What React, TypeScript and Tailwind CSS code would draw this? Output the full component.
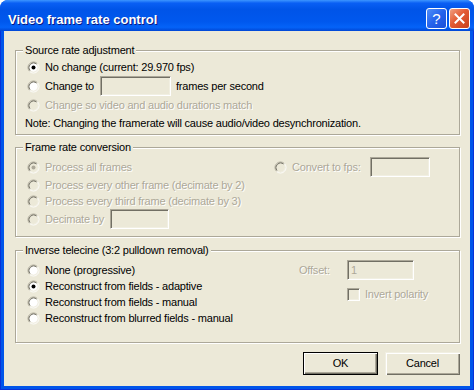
import type { ReactNode } from 'react';

// classic (non-themed) controls inside an XP Luna window frame

function Radio({ checked = false, disabled = false }: { checked?: boolean; disabled?: boolean }) {
  return (
    <svg width="13" height="13" viewBox="0 0 13 13" className="shrink-0">
      <circle cx="6.5" cy="6.5" r="4.5" fill={disabled ? '#ECE9D8' : '#FFFFFF'} />
      <path d="M2.61 10.39 A5.5 5.5 0 0 1 10.39 2.61" fill="none" stroke="#ACA899" />
      <path d="M10.39 2.61 A5.5 5.5 0 0 1 2.61 10.39" fill="none" stroke="#FFFFFF" />
      <path d="M3.32 9.68 A4.5 4.5 0 0 1 9.68 3.32" fill="none" stroke="#716F64" />
      <path d="M9.68 3.32 A4.5 4.5 0 0 1 3.32 9.68" fill="none" stroke="#F1EFE2" />
      {checked && <circle cx="6.5" cy="6.5" r="2" fill={disabled ? '#ACA899' : '#000000'} />}
    </svg>
  );
}

function Checkbox() {
  return (
    <div className="w-[13px] h-[13px] shrink-0 border border-t-[#ACA899] border-l-[#ACA899] border-b-white border-r-white shadow-[inset_1px_1px_0_#716F64,inset_-1px_-1px_0_#F1EFE2] bg-[#ECE9D8]" />
  );
}

function TextBox({ className = '', value = '' }: { className?: string; value?: string }) {
  return (
    <div
      className={`shrink-0 border border-t-[#ACA899] border-l-[#ACA899] border-b-white border-r-white shadow-[inset_1px_1px_0_#716F64,inset_-1px_-1px_0_#F1EFE2] bg-[#ECE9D8] flex items-center px-[3px] text-[#ACA899] ${className}`}
    >
      {value}
    </div>
  );
}

function Label({ children, disabled = false, className = '' }: { children: ReactNode; disabled?: boolean; className?: string }) {
  return (
    <span
      className={`whitespace-nowrap ${disabled ? 'text-[#ACA899] [text-shadow:1px_1px_0_#fff]' : 'text-black'} ${className}`}
    >
      {children}
    </span>
  );
}

function Group({ title, className = '', children }: { title: string; className?: string; children: ReactNode }) {
  return (
    <fieldset
      className={`ml-[11px] mr-[10px] border border-[#ACA899] shadow-[inset_1px_1px_0_#fff,1px_1px_0_#fff] ${className}`}
    >
      <legend className="ml-[7px] px-[2px] leading-[13px] bg-[#ECE9D8] text-black">{title}</legend>
      {children}
    </fieldset>
  );
}

function Button({ children, isDefault = false }: { children: ReactNode; isDefault?: boolean }) {
  return (
    <button
      className={`w-[75px] h-[23px] bg-[#ECE9D8] text-black flex items-center justify-center ${
        isDefault
          ? 'border border-black shadow-[inset_1px_1px_0_#fff,inset_-1px_-1px_0_#716F64,inset_-2px_-2px_0_#ACA899]'
          : 'shadow-[inset_1px_1px_0_#F1EFE2,inset_2px_2px_0_#fff,inset_-1px_-1px_0_#716F64,inset_-2px_-2px_0_#ACA899]'
      }`}
    >
      {children}
    </button>
  );
}

function TitleBar() {
  return (
    <div className="h-[31px] shrink-0 flex items-center rounded-t-[8px] bg-[linear-gradient(to_bottom,#3D95FF_0%,#0A5FF4_10%,#0054E8_30%,#0058EE_70%,#0463F8_88%,#0046D5_100%)]">
      <span className="ml-[8px] mt-[8px] tracking-normal text-white font-bold text-[13px] font-['Liberation_Sans',Arial,sans-serif] [text-shadow:1px_1px_0_#0A1883]">
        Video frame rate control
      </span>
      <div className="ml-auto mr-[4px] mt-[6px] flex gap-[2px]">
        <div className="w-[21px] h-[21px] rounded-[3px] border border-white bg-[linear-gradient(135deg,#4F8EF8_0%,#2663EC_50%,#1B4FD8_100%)] flex items-center justify-center text-white text-[15px] tracking-normal font-['Liberation_Sans',Arial,sans-serif]">
          ?
        </div>
        <div className="w-[21px] h-[21px] rounded-[3px] border border-white bg-[linear-gradient(135deg,#F0A083_0%,#E35B34_45%,#C8401C_100%)] flex items-center justify-center">
          <svg width="11" height="11" viewBox="0 0 11 11">
            <path d="M1.5 1.5 L9.5 9.5 M9.5 1.5 L1.5 9.5" stroke="#fff" strokeWidth="2" strokeLinecap="square" />
          </svg>
        </div>
      </div>
    </div>
  );
}

export default function App() {
  return (
    <div className="w-[474px] h-[390px] bg-white">
      <div className="w-[474px] h-[390px] flex flex-col rounded-t-[8px] bg-[#0055EA] font-['Liberation_Sans',Arial,sans-serif] text-[11px] leading-[13px] tracking-[-0.2px]">
        <TitleBar />
        <div className="flex-1 flex flex-col border-x border-b border-[#0831D9] bg-[#0055EA] px-[3px] pb-[3px]">
          <div className="flex-1 flex flex-col bg-[#ECE9D8]">
            {/* Source rate adjustment */}
            <Group title="Source rate adjustment" className="mt-[13px] h-[91px]">
              <div className="pl-[11px] pt-[1px] flex flex-col">
                <div className="h-[18px] flex items-center gap-[5px]">
                  <Radio checked />
                  <Label>No change (current: 29.970 fps)</Label>
                </div>
                <div className="h-[20px] flex items-center">
                  <Radio />
                  <Label className="ml-[5px] w-[55px]">Change to</Label>
                  <TextBox className="w-[71px] h-[20px]" />
                  <Label className="ml-[5px]">frames per second</Label>
                </div>
                <div className="h-[18px] flex items-center gap-[5px]">
                  <Radio disabled />
                  <Label disabled>Change so video and audio durations match</Label>
                </div>
                <div className="h-[19px] flex items-center -ml-[2px]">
                  <Label>Note: Changing the framerate will cause audio/video desynchronization.</Label>
                </div>
              </div>
            </Group>

            {/* Frame rate conversion */}
            <Group title="Frame rate conversion" className="mt-[6px] h-[96px]">
              <div className="pl-[11px] pt-[3px] flex flex-col">
                <div className="h-[20px] flex items-center">
                  <Radio checked disabled />
                  <Label disabled className="ml-[5px]">Process all frames</Label>
                  <div className="ml-auto mr-[29px] flex items-center">
                    <Radio disabled />
                    <Label disabled className="ml-[5px] w-[78px]">Convert to fps:</Label>
                    <TextBox className="w-[60px] h-[20px]" />
                  </div>
                </div>
                <div className="h-[16px] flex items-center gap-[5px]">
                  <Radio disabled />
                  <Label disabled>Process every other frame (decimate by 2)</Label>
                </div>
                <div className="h-[16px] flex items-center gap-[5px]">
                  <Radio disabled />
                  <Label disabled>Process every third frame (decimate by 3)</Label>
                </div>
                <div className="h-[20px] flex items-center">
                  <Radio disabled />
                  <Label disabled className="ml-[5px] w-[65px]">Decimate by</Label>
                  <TextBox className="w-[59px] h-[20px]" />
                </div>
              </div>
            </Group>

            {/* Inverse telecine */}
            <Group title="Inverse telecine (3:2 pulldown removal)" className="mt-[7px] h-[99px]">
              <div className="pl-[11px] flex">
                <div className="pt-[5px] flex flex-col">
                  <div className="h-[16px] flex items-center gap-[5px]">
                    <Radio />
                    <Label>None (progressive)</Label>
                  </div>
                  <div className="h-[16px] flex items-center gap-[5px]">
                    <Radio checked />
                    <Label>Reconstruct from fields - adaptive</Label>
                  </div>
                  <div className="h-[16px] flex items-center gap-[5px]">
                    <Radio />
                    <Label>Reconstruct from fields - manual</Label>
                  </div>
                  <div className="h-[16px] flex items-center gap-[5px]">
                    <Radio />
                    <Label>Reconstruct from blurred fields - manual</Label>
                  </div>
                </div>
                <div className="ml-auto mr-[45px] w-[115px] pt-[3px] flex flex-col">
                  <div className="h-[20px] flex items-center">
                    <Label disabled className="w-[48px]">Offset:</Label>
                    <TextBox className="w-[67px] h-[20px]" value="1" />
                  </div>
                  <div className="h-[28px] flex items-center pl-[48px]">
                    <Checkbox />
                    <Label disabled className="ml-[5px]">Invert polarity</Label>
                  </div>
                </div>
              </div>
            </Group>

            <div className="mt-[9px] mr-[10px] flex justify-end gap-[7px]">
              <Button isDefault>OK</Button>
              <Button>Cancel</Button>
            </div>
          </div>
        </div>
      </div>
    </div>
  );
}
